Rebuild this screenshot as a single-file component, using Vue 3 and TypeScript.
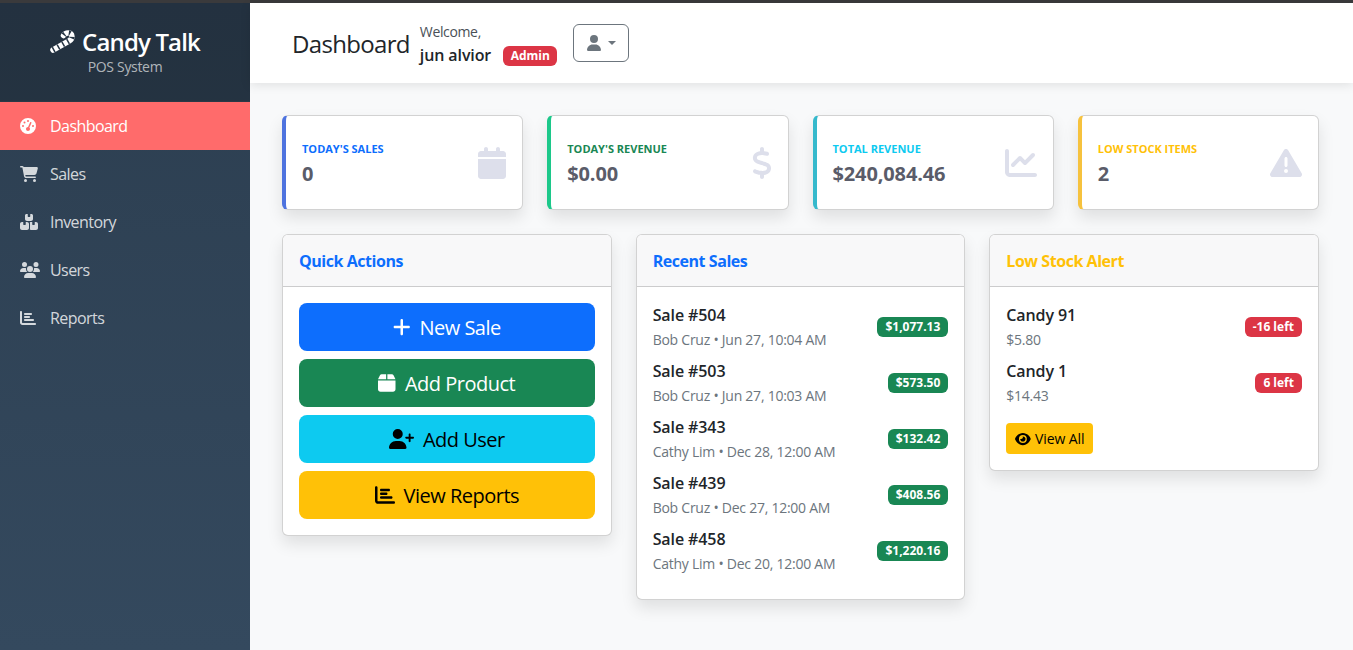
<script setup lang="ts">
const icons: Record<string, { box: string; d: string }> = {
  gauge: { box: '0 0 512 512', d: 'M0 256a256 256 0 1 1 512 0A256 256 0 1 1 0 256zM288 96a32 32 0 1 0 -64 0 32 32 0 1 0 64 0zM256 416c35.3 0 64-28.7 64-64c0-17.4-6.9-33.1-18.1-44.6L366 161.7c5.3-12.1-.2-26.3-12.3-31.6s-26.3 .2-31.6 12.3L257.9 288c-.6 0-1.3 0-1.9 0c-35.3 0-64 28.7-64 64s28.7 64 64 64zM176 144a32 32 0 1 0 -64 0 32 32 0 1 0 64 0zM96 288a32 32 0 1 0 0-64 32 32 0 1 0 0 64zm352-32a32 32 0 1 0 -64 0 32 32 0 1 0 64 0z' },
  cart: { box: '0 0 576 512', d: 'M0 24C0 10.7 10.7 0 24 0H69.5c22 0 41.5 12.8 50.6 32h411c26.3 0 45.5 25 38.6 50.4l-41 152.3c-8.5 31.4-37 53.3-69.5 53.3H170.7l5.4 28.5c2.2 11.3 12.1 19.5 23.6 19.5H488c13.3 0 24 10.7 24 24s-10.7 24-24 24H199.7c-34.6 0-64.3-24.6-70.7-58.5L77.4 54.5c-.7-3.8-4-6.5-7.9-6.5H24C10.7 48 0 37.3 0 24zM128 464a48 48 0 1 1 96 0 48 48 0 1 1 -96 0zm336-48a48 48 0 1 1 0 96 48 48 0 1 1 0-96z' },
  boxes: { box: '0 0 576 512', d: 'M248 0H208c-26.5 0-48 21.5-48 48V160c0 35.3 28.7 64 64 64H352c35.3 0 64-28.7 64-64V48c0-26.5-21.5-48-48-48H328V80c0 8.8-7.2 16-16 16H264c-8.8 0-16-7.2-16-16V0zM64 256c-35.3 0-64 28.7-64 64V448c0 35.3 28.7 64 64 64H224c35.3 0 64-28.7 64-64V320c0-35.3-28.7-64-64-64H184v80c0 8.8-7.2 16-16 16H120c-8.8 0-16-7.2-16-16V256H64zM352 512H512c35.3 0 64-28.7 64-64V320c0-35.3-28.7-64-64-64H472v80c0 8.8-7.2 16-16 16H408c-8.8 0-16-7.2-16-16V256H352c-15 0-28.8 5.1-39.7 13.8c4.9 10.4 7.7 22 7.7 34.2V464c0 12.2-2.8 23.8-7.7 34.2C323.2 506.9 337 512 352 512z' },
  users: { box: '0 0 640 512', d: 'M144 0a80 80 0 1 1 0 160A80 80 0 1 1 144 0zM512 0a80 80 0 1 1 0 160A80 80 0 1 1 512 0zM0 298.7C0 239.8 47.8 192 106.7 192h42.7c15.9 0 31 3.5 44.6 9.7c-1.3 7.2-1.9 14.7-1.9 22.3c0 38.2 16.8 72.5 43.3 96c-.2 0-.4 0-.7 0H21.3C9.6 320 0 310.4 0 298.7zM405.3 320c-.2 0-.4 0-.7 0c26.6-23.5 43.3-57.8 43.3-96c0-7.6-.7-15-1.9-22.3c13.6-6.3 28.7-9.7 44.6-9.7h42.7C592.2 192 640 239.8 640 298.7c0 11.8-9.6 21.3-21.3 21.3H405.3zM224 224a96 96 0 1 1 192 0 96 96 0 1 1 -192 0zM128 485.3C128 411.7 187.7 352 261.3 352H378.7C452.3 352 512 411.7 512 485.3c0 14.7-11.9 26.7-26.7 26.7H154.7c-14.7 0-26.7-11.9-26.7-26.7z' },
  bars: { box: '0 0 512 512', d: 'M32 32c17.7 0 32 14.3 32 32V400c0 8.8 7.2 16 16 16H480c17.7 0 32 14.3 32 32s-14.3 32-32 32H80c-44.2 0-80-35.8-80-80V64C0 46.3 14.3 32 32 32zm96 96c0-17.7 14.3-32 32-32l192 0c17.7 0 32 14.3 32 32s-14.3 32-32 32l-192 0c-17.7 0-32-14.3-32-32zm32 64H288c17.7 0 32 14.3 32 32s-14.3 32-32 32H160c-17.7 0-32-14.3-32-32s14.3-32 32-32zm0 96H416c17.7 0 32 14.3 32 32s-14.3 32-32 32H160c-17.7 0-32-14.3-32-32s14.3-32 32-32z' },
  calendar: { box: '0 0 448 512', d: 'M96 32V64H48C21.5 64 0 85.5 0 112v48H448V112c0-26.5-21.5-48-48-48H352V32c0-17.7-14.3-32-32-32s-32 14.3-32 32V64H160V32c0-17.7-14.3-32-32-32S96 14.3 96 32zM448 192H0V464c0 26.5 21.5 48 48 48H400c26.5 0 48-21.5 48-48V192z' },
  dollar: { box: '0 0 320 512', d: 'M160 0c17.7 0 32 14.3 32 32V67.7c1.6 .2 3.1 .4 4.7 .7c.4 .1 .7 .1 1.1 .2l48 8.8c17.4 3.2 28.9 19.9 25.7 37.2s-19.9 28.9-37.2 25.7l-47.5-8.7c-31.3-4.6-58.9-1.5-78.3 6.2s-27.2 18.3-29 28.1c-2 10.7-.5 16.7 1.2 20.4c1.8 3.9 5.5 8.3 12.8 13.2c16.3 10.7 41.3 17.7 73.7 26.3l2.9 .8c28.6 7.6 63.6 16.8 89.6 33.8c14.2 9.3 27.6 21.9 35.9 39.5c8.5 17.9 10.3 37.9 6.4 59.2c-6.9 38-33.1 63.4-65.6 76.7c-13.7 5.6-28.6 9.2-44.4 11V480c0 17.7-14.3 32-32 32s-32-14.3-32-32V445.1c-.4-.1-.9-.1-1.3-.2l-.2 0 0 0c-24.4-3.8-64.5-14.3-91.5-26.3c-16.1-7.2-23.4-26.1-16.2-42.2s26.1-23.4 42.2-16.2c20.9 9.3 55.3 18.5 75.2 21.6c31.9 4.7 58.2 2 76-5.3c16.9-6.9 24.6-16.9 26.8-28.9c1.9-10.6 .4-16.7-1.3-20.4c-1.9-4-5.6-8.4-13-13.3c-16.4-10.7-41.5-17.7-74-26.3l-2.8-.7 0 0C119.4 279.3 84.4 270 58.4 253c-14.2-9.3-27.5-22-35.8-39.6c-8.4-17.9-10.1-37.9-6.1-59.2C23.7 116 52.3 91.2 84.8 78.3c13.3-5.3 27.9-8.9 43.2-11V32c0-17.7 14.3-32 32-32z' },
  line: { box: '0 0 512 512', d: 'M64 64c0-17.7-14.3-32-32-32S0 46.3 0 64V400c0 44.2 35.8 80 80 80H480c17.7 0 32-14.3 32-32s-14.3-32-32-32H80c-8.8 0-16-7.2-16-16V64zm406.6 86.6c12.5-12.5 12.5-32.8 0-45.3s-32.8-12.5-45.3 0L320 210.7l-57.4-57.4c-12.5-12.5-32.8-12.5-45.3 0l-112 112c-12.5 12.5-12.5 32.8 0 45.3s32.8 12.5 45.3 0L240 221.3l57.4 57.4c12.5 12.5 32.8 12.5 45.3 0l128-128z' },
  warn: { box: '0 0 512 512', d: 'M256 32c14.2 0 27.3 7.5 34.5 19.8l216 368c7.3 12.4 7.3 27.7 .2 40.1S486.3 480 472 480H40c-14.3 0-27.6-7.7-34.7-20.1s-7-27.8 .2-40.1l216-368C228.7 39.5 241.8 32 256 32zm0 128c-13.3 0-24 10.7-24 24V296c0 13.3 10.7 24 24 24s24-10.7 24-24V184c0-13.3-10.7-24-24-24zm32 224a32 32 0 1 0 -64 0 32 32 0 1 0 64 0z' },
  user: { box: '0 0 448 512', d: 'M224 256A128 128 0 1 0 224 0a128 128 0 1 0 0 256zm-45.7 48C79.8 304 0 383.8 0 482.3C0 498.7 13.3 512 29.7 512H418.3c16.4 0 29.7-13.3 29.7-29.7C448 383.8 368.2 304 269.7 304H178.3z' },
  plus: { box: '0 0 448 512', d: 'M256 80c0-17.7-14.3-32-32-32s-32 14.3-32 32V224H48c-17.7 0-32 14.3-32 32s14.3 32 32 32H192V432c0 17.7 14.3 32 32 32s32-14.3 32-32V288H400c17.7 0 32-14.3 32-32s-14.3-32-32-32H256V80z' },
  box: { box: '0 0 448 512', d: 'M50.7 58.5L0 160H208V32H93.7C75.5 32 58.9 42.3 50.7 58.5zM240 160H448L397.3 58.5C389.1 42.3 372.5 32 354.3 32H240V160zm208 32H0V416c0 35.3 28.7 64 64 64H384c35.3 0 64-28.7 64-64V192z' },
  userPlus: { box: '0 0 640 512', d: 'M96 128a128 128 0 1 1 256 0A128 128 0 1 1 96 128zM0 482.3C0 383.8 79.8 304 178.3 304h91.4C368.2 304 448 383.8 448 482.3c0 16.4-13.3 29.7-29.7 29.7H29.7C13.3 512 0 498.7 0 482.3zM504 312V248H440c-13.3 0-24-10.7-24-24s10.7-24 24-24h64V136c0-13.3 10.7-24 24-24s24 10.7 24 24v64h64c13.3 0 24 10.7 24 24s-10.7 24-24 24H552v64c0 13.3-10.7 24-24 24s-24-10.7-24-24z' },
  eye: { box: '0 0 576 512', d: 'M288 32c-80.8 0-145.5 36.8-192.6 80.6C48.6 156 17.3 208 2.5 243.7c-3.3 7.9-3.3 16.7 0 24.6C17.3 304 48.6 356 95.4 399.4C142.5 443.2 207.2 480 288 480s145.5-36.8 192.6-80.6c46.8-43.5 78.1-95.4 92.9-131.1c3.3-7.9 3.3-16.7 0-24.6c-14.8-35.7-46.1-87.7-92.9-131.1C433.5 68.8 368.8 32 288 32zM144 256a144 144 0 1 1 288 0 144 144 0 1 1 -288 0zm144-64c0 35.3-28.7 64-64 64c-7.1 0-13.9-1.2-20.3-3.3c-5.5-1.8-11.9 1.6-11.7 7.4c.3 6.9 1.3 13.8 3.2 20.7c13.7 51.2 66.4 81.6 117.6 67.9s81.6-66.4 67.9-117.6c-11.1-41.5-47.8-69.4-88.6-71.1c-5.8-.2-9.2 6.1-7.4 11.7c2.1 6.4 3.3 13.2 3.3 20.3z' },
}

const canePath = 'M3 20 L19 11 C23 9 23 3 18 3 C16 3 14.5 4 13.5 5.5'

const nav = [
  { label: 'Dashboard', icon: 'gauge', active: true },
  { label: 'Sales', icon: 'cart' },
  { label: 'Inventory', icon: 'boxes' },
  { label: 'Users', icon: 'users' },
  { label: 'Reports', icon: 'bars' },
]

const stats = [
  { label: "Today's Sales", value: '0', icon: 'calendar', tone: 'primary' },
  { label: "Today's Revenue", value: '$0.00', icon: 'dollar', tone: 'success' },
  { label: 'Total Revenue', value: '$240,084.46', icon: 'line', tone: 'info' },
  { label: 'Low Stock Items', value: '2', icon: 'warn', tone: 'warning' },
]

const actions = [
  { label: 'New Sale', icon: 'plus', tone: 'primary' },
  { label: 'Add Product', icon: 'box', tone: 'success' },
  { label: 'Add User', icon: 'userPlus', tone: 'info' },
  { label: 'View Reports', icon: 'bars', tone: 'warning' },
]

const sales = [
  { title: 'Sale #504', sub: 'Bob Cruz • Jun 27, 10:04 AM', amount: '$1,077.13' },
  { title: 'Sale #503', sub: 'Bob Cruz • Jun 27, 10:03 AM', amount: '$573.50' },
  { title: 'Sale #343', sub: 'Cathy Lim • Dec 28, 12:00 AM', amount: '$132.42' },
  { title: 'Sale #439', sub: 'Bob Cruz • Dec 27, 12:00 AM', amount: '$408.56' },
  { title: 'Sale #458', sub: 'Cathy Lim • Dec 20, 12:00 AM', amount: '$1,220.16' },
]

const lowStock = [
  { title: 'Candy 91', sub: '$5.80', left: '-16 left' },
  { title: 'Candy 1', sub: '$14.43', left: '6 left' },
]
</script>

<template>
  <div class="app">
    <div class="top-strip"></div>
    <div class="layout">
      <aside class="sidebar">
        <div class="brand">
          <div class="brand-name">
            <svg class="cane" viewBox="0 0 26 24" width="26" height="24">
              <path class="cane-base" :d="canePath" />
              <path class="cane-stripes" :d="canePath" />
            </svg>
            <span>Candy Talk</span>
          </div>
          <div class="brand-sub">POS System</div>
        </div>
        <nav>
          <a v-for="item in nav" :key="item.label" class="nav-link" :class="{ active: item.active }">
            <span class="nav-icon">
              <svg :viewBox="icons[item.icon].box"><path :d="icons[item.icon].d" /></svg>
            </span>
            {{ item.label }}
          </a>
        </nav>
      </aside>

      <main class="main">
        <header class="topbar">
          <h1>Dashboard</h1>
          <div class="welcome">
            <div class="welcome-hi">Welcome,</div>
            <div class="welcome-user">
              <strong>jun alvior</strong>
              <span class="badge bg-danger role">Admin</span>
            </div>
          </div>
          <button class="user-btn">
            <svg :viewBox="icons.user.box"><path :d="icons.user.d" /></svg>
            <i class="caret"></i>
          </button>
        </header>

        <div class="content">
          <div class="stats">
            <div v-for="s in stats" :key="s.label" class="stat" :class="'stat-' + s.tone">
              <div>
                <div class="stat-label">{{ s.label }}</div>
                <div class="stat-value">{{ s.value }}</div>
              </div>
              <svg class="stat-icon" :viewBox="icons[s.icon].box"><path :d="icons[s.icon].d" /></svg>
            </div>
          </div>

          <div class="panels">
            <section class="card">
              <div class="card-head text-primary">Quick Actions</div>
              <div class="card-body actions">
                <button v-for="a in actions" :key="a.label" class="action" :class="'btn-' + a.tone">
                  <svg :viewBox="icons[a.icon].box"><path :d="icons[a.icon].d" /></svg>
                  {{ a.label }}
                </button>
              </div>
            </section>

            <section class="card">
              <div class="card-head text-primary">Recent Sales</div>
              <div class="card-body">
                <div v-for="s in sales" :key="s.title" class="row">
                  <div>
                    <div class="row-title">{{ s.title }}</div>
                    <div class="row-sub">{{ s.sub }}</div>
                  </div>
                  <span class="badge bg-success">{{ s.amount }}</span>
                </div>
              </div>
            </section>

            <section class="card">
              <div class="card-head text-warning">Low Stock Alert</div>
              <div class="card-body">
                <div v-for="c in lowStock" :key="c.title" class="row">
                  <div>
                    <div class="row-title">{{ c.title }}</div>
                    <div class="row-sub">{{ c.sub }}</div>
                  </div>
                  <span class="badge bg-danger">{{ c.left }}</span>
                </div>
                <button class="view-all">
                  <svg :viewBox="icons.eye.box"><path :d="icons.eye.d" /></svg>
                  View All
                </button>
              </div>
            </section>
          </div>
        </div>
      </main>
    </div>
  </div>
</template>

<style>
html, body {
  margin: 0;
  background: #f8f9fa;
}
</style>

<style scoped>
.app {
  height: 650px;
  display: flex;
  flex-direction: column;
  overflow: hidden;
  font-family: "Open Sans", "Noto Sans", sans-serif;
  color: #212529;
  letter-spacing: -0.02em;
}

.top-strip {
  height: 3px;
  background: #3a3a3c;
  flex: none;
}

.layout {
  flex: 1;
  display: flex;
  min-height: 0;
}

.sidebar {
  width: 250px;
  flex: none;
  background: linear-gradient(180deg, #2c3e50, #34495e);
}

.brand {
  height: 99px;
  box-sizing: border-box;
  padding-top: 24px;
  text-align: center;
  background: rgba(0, 0, 0, 0.2);
  border-bottom: 1px solid rgba(255, 255, 255, 0.03);
}

.brand-name {
  display: flex;
  justify-content: center;
  align-items: center;
  gap: 6px;
  color: #fff;
  font-size: 24px;
  font-weight: 600;
  line-height: 30px;
  letter-spacing: -0.035em;
}

.cane-base,
.cane-stripes {
  fill: none;
  stroke-width: 5.5;
  stroke-linecap: round;
}

.cane-base {
  stroke: #fff;
}

.cane-stripes {
  stroke: #263544;
  stroke-linecap: butt;
  stroke-dasharray: 1.5 4;
}

.brand-sub {
  font-size: 14px;
  color: rgba(255, 255, 255, 0.65);
  line-height: 19px;
}

.nav-link {
  height: 48px;
  display: flex;
  align-items: center;
  padding: 0 20px;
  font-size: 16px;
  letter-spacing: -0.035em;
  color: rgba(255, 255, 255, 0.8);
}

.nav-link.active {
  background: #ff6b6b;
  color: #fff;
}

.nav-icon {
  width: 20px;
  margin-right: 10px;
  display: flex;
  align-items: center;
}

.nav-icon svg {
  height: 16px;
  max-width: 20px;
  fill: currentColor;
}

.main {
  flex: 1;
  min-width: 0;
}

.topbar {
  height: 80px;
  box-sizing: border-box;
  background: #fff;
  box-shadow: 0 2px 10px rgba(0, 0, 0, 0.1);
  display: flex;
  align-items: center;
  padding: 0 42px;
  position: relative;
}

.topbar h1 {
  margin: 0 10px 0 0;
  font-size: 24px;
  font-weight: 500;
  line-height: 29px;
  letter-spacing: -0.028em;
}

.welcome {
  padding-top: 4px;
}

.welcome-hi {
  font-size: 14px;
  line-height: 20px;
  color: #495057;
  margin-top: -2px;
  letter-spacing: -0.025em;
}

.welcome-user {
  display: flex;
  align-items: center;
  line-height: 24px;
  margin-top: 1px;
}

.welcome-user strong {
  font-size: 16px;
  font-weight: 600;
  letter-spacing: -0.1px;
}

.badge {
  display: inline-block;
  padding: 4px 8px;
  border-radius: 6px;
  color: #fff;
  font-size: 12px;
  font-weight: 700;
  line-height: 12px;
  letter-spacing: 0;
}

.role {
  margin-left: 12px;
  margin-top: 3px;
  padding: 4px 7.5px;
}

.bg-danger {
  background: #dc3545;
}

.bg-success {
  background: #198754;
}

.user-btn {
  width: 56px;
  height: 38px;
  margin-left: 16px;
  margin-top: 0;
  border: 1px solid #6c757d;
  border-radius: 6px;
  background: none;
  display: flex;
  align-items: center;
  justify-content: center;
  color: #6c757d;
  padding: 0;
}

.user-btn svg {
  height: 16px;
  fill: currentColor;
}

.caret {
  margin-left: 7px;
  border-top: 4.8px solid currentColor;
  border-left: 4.8px solid transparent;
  border-right: 4.8px solid transparent;
}

.content {
  padding: 32px 34px 32px 32px;
}

.stats {
  display: grid;
  grid-template-columns: repeat(4, 1fr);
  gap: 24px;
  margin-bottom: 24px;
}

.stat {
  height: 95px;
  box-sizing: border-box;
  background: #fff;
  border: 1px solid rgba(0, 0, 0, 0.175);
  border-radius: 6px;
  box-shadow: 0 8px 16px rgba(0, 0, 0, 0.1);
  display: flex;
  align-items: center;
  justify-content: space-between;
  padding: 0 16px 0 16px;
}

.stat-primary { border-left: 4px solid #4e73df; }
.stat-success { border-left: 4px solid #1cc88a; }
.stat-info { border-left: 4px solid #36b9cc; }
.stat-warning { border-left: 4px solid #f6c23e; }

.stat-label {
  font-size: 11px;
  font-weight: 700;
  text-transform: uppercase;
  line-height: 16px;
  margin-bottom: 5px;
  margin-top: 1px;
  letter-spacing: 0;
}

.stat-primary .stat-label { color: #0d6efd; }
.stat-success .stat-label { color: #198754; }
.stat-info .stat-label { color: #0dcaf0; }
.stat-warning .stat-label { color: #ffc107; }

.stat-value {
  font-size: 20px;
  font-weight: 700;
  line-height: 24px;
  color: #5a5c69;
  letter-spacing: -0.13px;
}

.stat-icon {
  height: 32px;
  fill: #dddfeb;
}

.panels {
  display: grid;
  grid-template-columns: repeat(3, 1fr);
  gap: 24px;
  align-items: start;
}

.card {
  background: #fff;
  border: 1px solid rgba(0, 0, 0, 0.175);
  border-radius: 6px;
  box-shadow: 0 8px 16px rgba(0, 0, 0, 0.1);
  overflow: hidden;
}

.card-head {
  height: 52px;
  box-sizing: border-box;
  display: flex;
  align-items: center;
  padding: 0 16px;
  background: #f8f8f9;
  border-bottom: 1px solid rgba(0, 0, 0, 0.175);
  font-size: 16px;
  font-weight: 700;
  letter-spacing: -0.45px;
}

.text-primary { color: #0d6efd; }
.text-warning { color: #ffc107; }

.card-body {
  padding: 16px;
}

.actions {
  display: flex;
  flex-direction: column;
  gap: 8px;
}

.action {
  height: 48px;
  border: none;
  border-radius: 8px;
  font: inherit;
  font-size: 20px;
  display: flex;
  align-items: center;
  justify-content: center;
  letter-spacing: -0.5px;
  gap: 9px;
}

.action svg {
  height: 20px;
  fill: currentColor;
}

.btn-primary { background: #0d6efd; color: #fff; }
.btn-success { background: #198754; color: #fff; }
.btn-info { background: #0dcaf0; color: #000; }
.btn-warning { background: #ffc107; color: #000; }

.row {
  height: 56px;
  box-sizing: border-box;
  padding-bottom: 8px;
  display: flex;
  align-items: center;
  justify-content: space-between;
}

.row-title {
  font-size: 16px;
  font-weight: 600;
  line-height: 24px;
  letter-spacing: -0.1px;
}

.row-sub {
  font-size: 14px;
  line-height: 24px;
  padding-top: 1px;
  margin-bottom: -1px;
  color: #6c757d;
  letter-spacing: -0.25px;
}

.view-all {
  margin-top: 8px;
  height: 31px;
  padding: 0 9px;
  display: flex;
  align-items: center;
  gap: 4px;
  border: none;
  border-radius: 4px;
  background: #ffc107;
  font: inherit;
  font-size: 14px;
  letter-spacing: -0.1px;
  color: #000;
}

.view-all svg {
  height: 14px;
  fill: currentColor;
}
</style>
